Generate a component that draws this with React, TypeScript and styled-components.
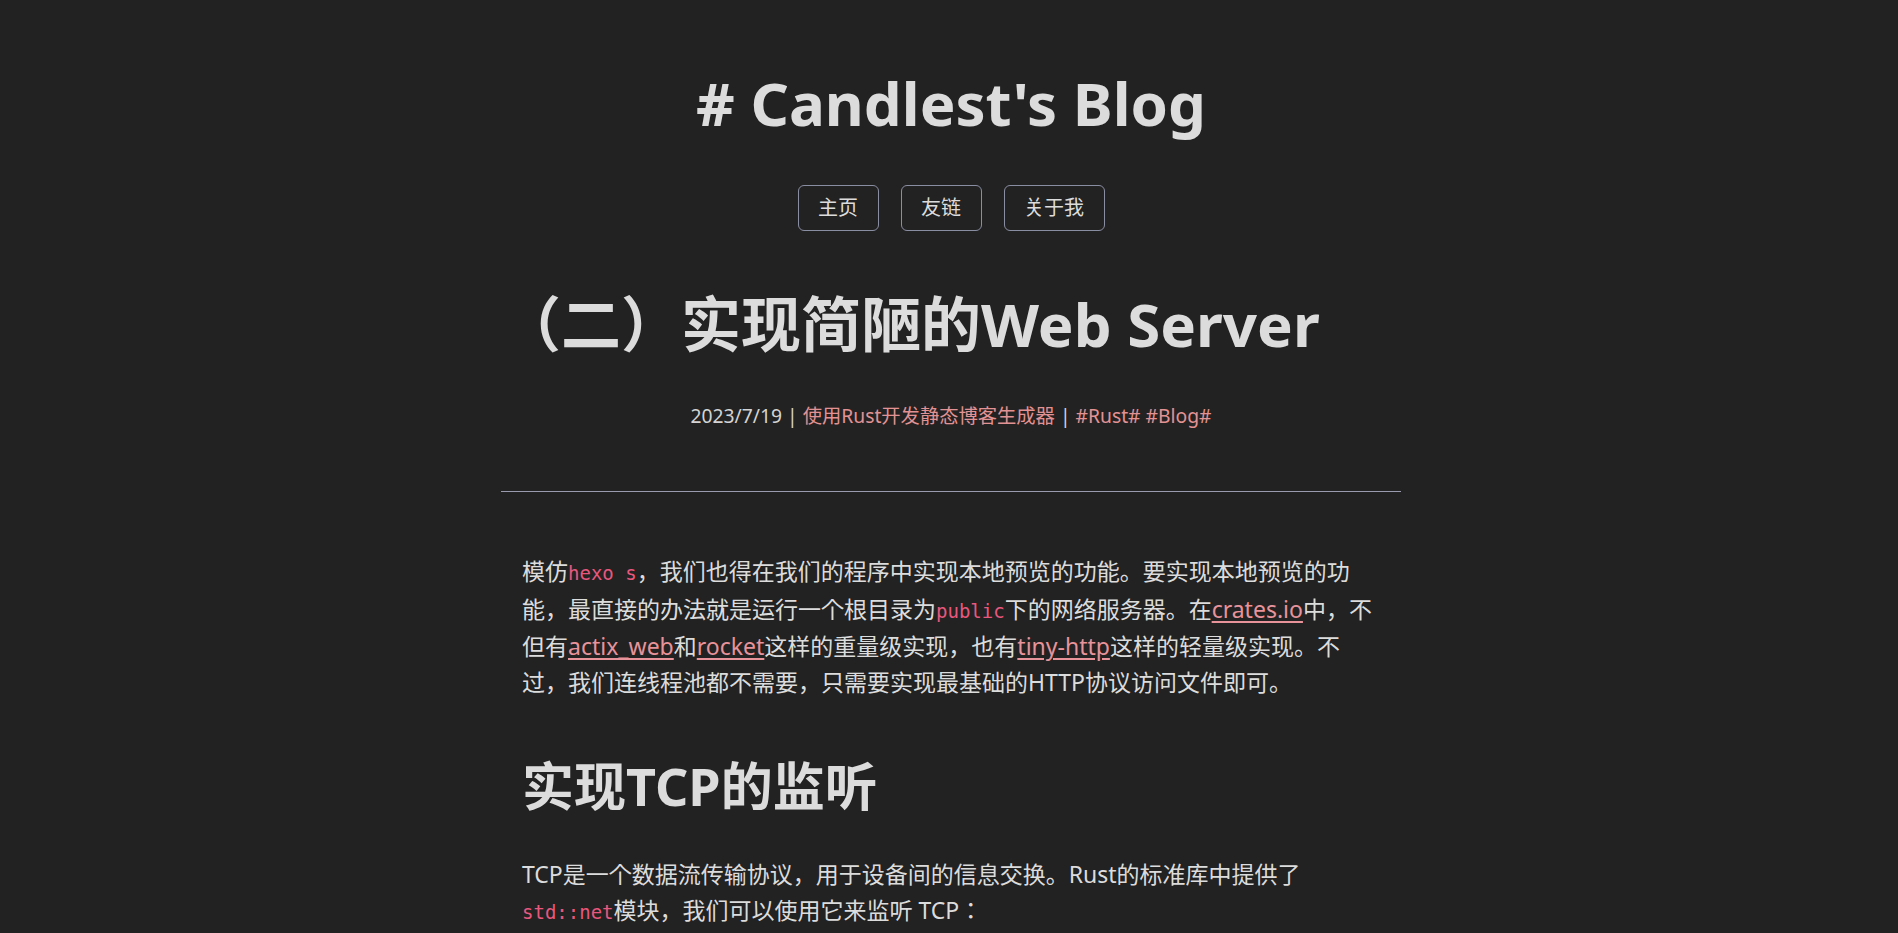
import styled, { createGlobalStyle } from "styled-components";

const GlobalStyle = createGlobalStyle`
  html, body {
    margin: 0;
    padding: 0;
    background-color: #222222;
  }
  body {
    padding-left: 4px;
    color: #dcdcdc;
    font-family: "Noto Sans", "Noto Sans CJK JP", sans-serif;
    font-size: 18px;
  }
`;

const Header = styled.header`
  display: flex;
  flex-direction: column;
  align-items: center;
  padding-top: 67px;
`;

const SiteTitle = styled.h1`
  margin: 0;
  font-size: 60px;
  line-height: 73px;
  font-weight: 700;
`;

const Nav = styled.nav`
  display: flex;
  gap: 22px;
  margin-top: 45px;
`;

const NavButton = styled.a`
  display: block;
  padding: 8px 19.5px;
  line-height: 28px;
  font-size: 20px;
  color: #dcdcdc;
  border: 1px solid #8a8ea2;
  border-radius: 6px;
  text-decoration: none;
`;

const Article = styled.article`
  width: 900px;
  margin: 0 auto;
`;

const PostTitle = styled.h1`
  margin: 53px 0 0;
  font-size: 60px;
  line-height: 80px;
  font-weight: 700;
`;

const Meta = styled.div`
  margin-top: 38px;
  text-align: center;
  font-size: 19.3px;
  line-height: 28px;
  color: #d4d4d4;
`;

const MetaLink = styled.a`
  color: #e39294;
  text-decoration: none;
`;

const Rule = styled.hr`
  margin: 61px 0 0;
  border: 0;
  border-top: 1px solid #9b9bb0;
`;

const Body = styled.div`
  padding: 0 26px 0 21px;
`;

const Paragraph = styled.p<{ $top: number }>`
  margin: ${(p) => p.$top}px 0 0;
  font-size: 23px;
  line-height: 35.6px;
`;

const Heading = styled.h2`
  margin: 53px 0 0;
  font-size: 52px;
  line-height: 65px;
  font-weight: 700;
`;

const Code = styled.code`
  font-family: "DejaVu Sans Mono", monospace;
  font-size: 19px;
  color: #e8577e;
`;

const Link = styled.a`
  color: #e8939a;
  text-decoration: underline;
  text-underline-offset: 3px;
`;

export default function App() {
  return (
    <>
      <GlobalStyle />
      <Header>
        <SiteTitle># Candlest's Blog</SiteTitle>
        <Nav>
          <NavButton href="#">主页</NavButton>
          <NavButton href="#">友链</NavButton>
          <NavButton href="#">关于我</NavButton>
        </Nav>
      </Header>
      <Article>
        <PostTitle>（二）实现简陋的Web Server</PostTitle>
        <Meta>
          2023/7/19 | <MetaLink href="#">使用Rust开发静态博客生成器</MetaLink> |{" "}
          <MetaLink href="#">#Rust#</MetaLink> <MetaLink href="#">#Blog#</MetaLink>
        </Meta>
        <Rule />
        <Body>
          <Paragraph $top={62}>
            模仿<Code>hexo s</Code>，我们也得在我们的程序中实现本地预览的功能。要实现本地预览的功能，最直接的办法就是运行一个根目录为
            <Code>public</Code>下的网络服务器。在<Link href="#">crates.io</Link>中，不但有
            <Link href="#">actix_web</Link>和<Link href="#">rocket</Link>这样的重量级实现，也有
            <Link href="#">tiny-http</Link>这样的轻量级实现。不过，我们连线程池都不需要，只需要实现最基础的HTTP协议访问文件即可。
          </Paragraph>
          <Heading>实现TCP的监听</Heading>
          <Paragraph $top={39}>
            TCP是一个数据流传输协议，用于设备间的信息交换。Rust的标准库中提供了
            <Code>std::net</Code>模块，我们可以使用它来监听 TCP：
          </Paragraph>
        </Body>
      </Article>
    </>
  );
}
